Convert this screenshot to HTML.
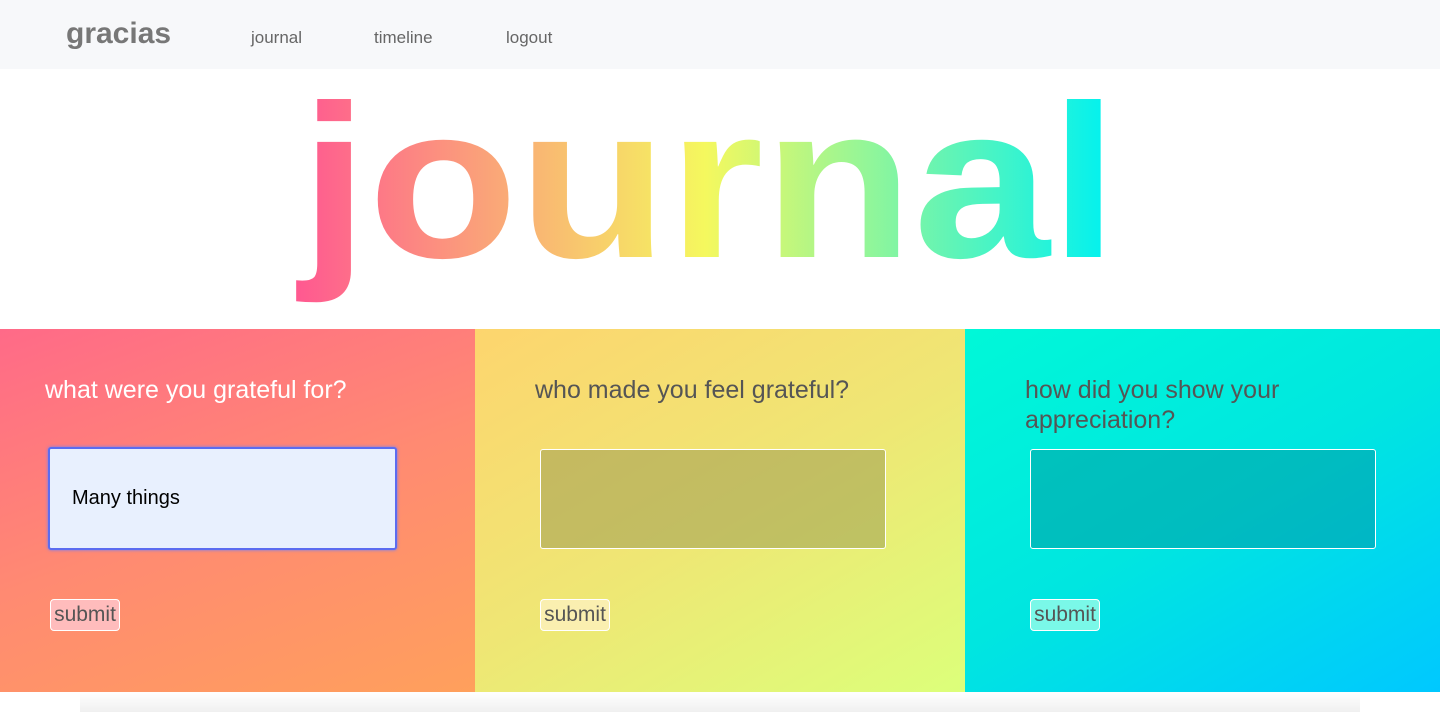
<!DOCTYPE html>
<html><head><style>
body{margin:0;width:1440px;height:712px;overflow:hidden;background:#fff;font-family:"Liberation Sans",sans-serif;position:relative}
.nav{position:absolute;left:0;top:0;width:1440px;height:69px;background:#f7f8fa}
.nav span{position:absolute;top:28px;font-size:17px;color:#666}
.brand{left:66px!important;top:17px!important;font-size:30px!important;font-weight:bold;color:#777!important}
.p{position:absolute;top:329px;height:363px}
.p h2{position:absolute;left:45px;top:46px;margin:0;font-weight:normal;font-size:25px;line-height:30px;width:380px}
.ta{position:absolute;left:65px;top:120px;width:344px;height:98px;border:1px solid #fff;border-radius:3px}
.btn{position:absolute;left:50px;top:270px;width:68px;height:30px;border:1px solid #fff;border-radius:4px;font-size:21px;color:#555;line-height:30px;text-align:center}
.shadow{position:absolute;left:80px;top:692px;width:1280px;height:20px;background:linear-gradient(#fff,#f0f0f0)}
</style></head><body>
<div class="nav"><span class="brand">gracias</span><span style="left:251px">journal</span><span style="left:374px">timeline</span><span style="left:506px">logout</span></div>
<svg style="position:absolute;left:0;top:69px" width="1440" height="260">
<defs><linearGradient id="g" x1="300" x2="1110" y1="0" y2="0" gradientUnits="userSpaceOnUse">
<stop offset="0" stop-color="#ff5a90"/><stop offset="0.5" stop-color="#f5f85e"/><stop offset="1" stop-color="#00f2f0"/></linearGradient></defs>
<text x="300" y="188" font-family="Liberation Sans,sans-serif" font-weight="bold" font-size="218" textLength="818" lengthAdjust="spacingAndGlyphs" fill="url(#g)">journal</text>
</svg>
<div class="p" style="left:0;width:475px;background:linear-gradient(160deg,#ff6a88,#ff8a72 50%,#ffa05c)">
<h2 style="color:#fff">what were you grateful for?</h2>
<div class="ta" style="left:48px;top:118px;background:#e8f0fe;border:2px solid #5b6cf0;box-shadow:0 0 3px #6a7cff;font-size:20px;line-height:99px;padding-left:22px;box-sizing:border-box;width:349px;height:103px">Many things</div>
<div class="btn" style="background:#ffbcbc">submit</div></div>
<div class="p" style="left:475px;width:490px;background:linear-gradient(150deg,#fdd56e,#efe674 50%,#dcff7a)">
<h2 style="color:#555;left:60px">who made you feel grateful?</h2>
<div class="ta" style="background:rgba(150,150,80,0.5)"></div>
<div class="btn" style="left:65px;background:#faefb0">submit</div></div>
<div class="p" style="left:965px;width:475px;background:linear-gradient(150deg,#00f8d8,#00e6e0 50%,#00c8ff)">
<h2 style="color:#555;left:60px">how did you show your appreciation?</h2>
<div class="ta" style="background:rgba(0,140,150,0.45)"></div>
<div class="btn" style="left:65px;background:#7af8e8">submit</div></div>
<div class="shadow"></div>
</body></html>
